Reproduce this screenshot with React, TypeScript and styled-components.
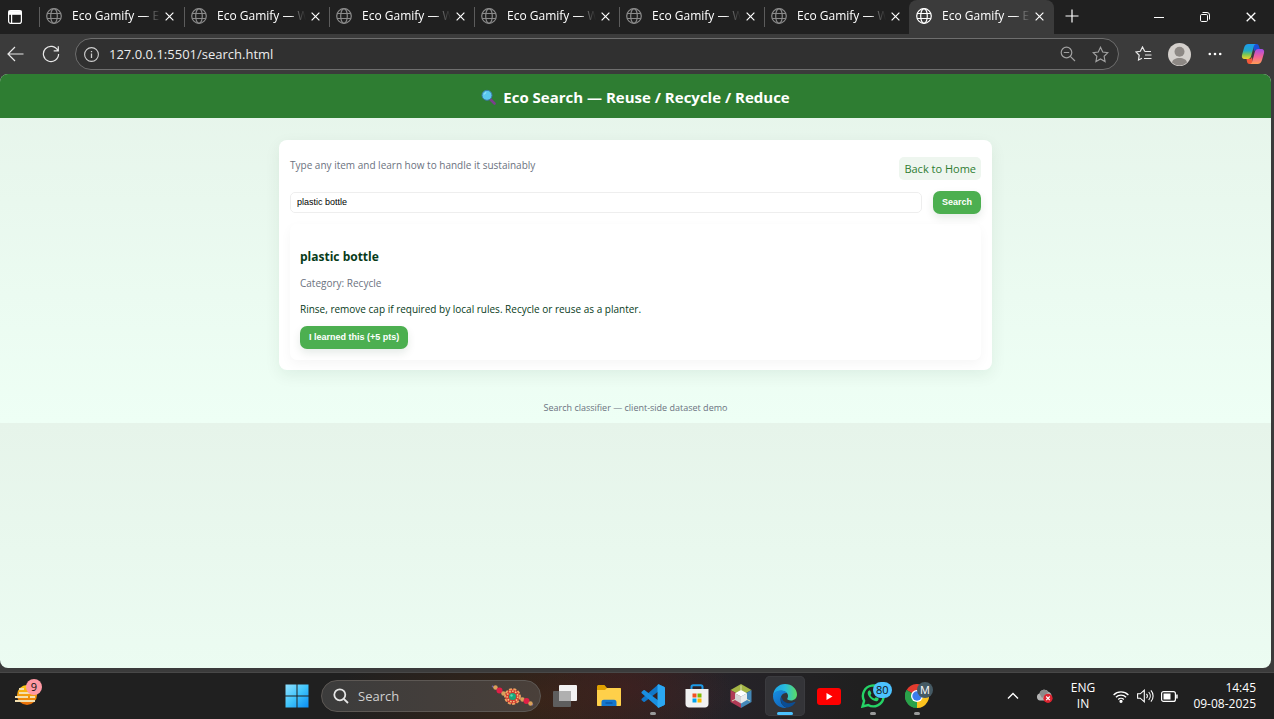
import React from "react";
import styled, { createGlobalStyle } from "styled-components";

const ui = `"Open Sans", "Noto Sans", sans-serif`;
const arial = `"Liberation Sans", sans-serif`;

const GlobalStyle = createGlobalStyle`
  *, *::before, *::after { box-sizing: border-box; }
  body { margin: 0; background: #3b3b3b; font-family: ${ui}; }
  button, input { font: inherit; color: inherit; }
  button { border: 0; padding: 0; background: none; cursor: pointer; }
  svg { display: block; flex: none; }
`;

const Screen = styled.div`
  display: flex;
  flex-direction: column;
  min-height: 100vh;
`;

/* Tab strip */

const TabStrip = styled.div`
  display: flex;
  height: 34px;
  background: #202020;
  color: #fff;
`;

const TabActions = styled.button`
  display: flex;
  align-items: center;
  flex: none;
  width: 39px;
  padding-left: 7px;
`;

const TabList = styled.div`
  display: flex;
  flex: 0 1 auto;
  min-width: 0;
`;

const Tab = styled.div<{ $active?: boolean }>`
  position: relative;
  display: flex;
  align-items: center;
  width: 145px;
  min-width: 0;
  padding: 0 7px 2px 6px;
  border-left: 1px solid transparent;
  border-radius: ${(p) => (p.$active ? "8px 8px 0 0" : "0")};
  background: ${(p) => (p.$active ? "#3b3b3b" : "transparent")};
  color: ${(p) => (p.$active ? "#fff" : "#8a8a8a")};
  &::before {
    content: "";
    position: absolute;
    left: -1px;
    top: 7px;
    width: 1px;
    height: 20px;
    background: ${(p) => (p.$active ? "transparent" : "#5c5c5c")};
  }
`;

const TabTitle = styled.span`
  flex: 1;
  margin-left: 10px;
  white-space: nowrap;
  font-size: 12px;
  line-height: 16px;
  color: #fff;
  mask-image: linear-gradient(to right, #000 74px, rgba(0, 0, 0, 0.4) 79px, transparent 89px);
`;

const TabClose = styled.button`
  display: grid;
  place-items: center;
  width: 16px;
  height: 16px;
  color: #fff;
`;

const NewTab = styled.button`
  display: grid;
  place-items: center;
  width: 36px;
  height: 32px;
`;

const WindowControls = styled.div`
  display: flex;
  margin-left: auto;
`;

const WindowButton = styled.button`
  display: grid;
  place-items: center;
  width: 46px;
  height: 34px;
`;

/* Toolbar */

const Toolbar = styled.div`
  display: flex;
  align-items: center;
  height: 40px;
  padding: 0 3px 0 6px;
  background: #3b3b3b;
  color: #e8e8e8;
`;

const NavButton = styled.button`
  display: grid;
  place-items: center;
  flex: none;
  width: 36px;
  height: 32px;
  &:first-child { width: 18px; margin-right: 9px; }
`;

const AddressBar = styled.div`
  display: flex;
  align-items: center;
  flex: 1;
  height: 32px;
  margin: 0 6px;
  padding: 0 7px 0 8px;
  gap: 10px;
  border: 1px solid #6e6e6e;
  border-radius: 16px;
  background: #303030;
`;

const Address = styled.input`
  flex: 1;
  min-width: 0;
  padding: 0;
  border: 0;
  outline: 0;
  background: none;
  color: #ececec;
  font-size: 13px;
  line-height: 18px;
`;

const BarButton = styled.button`
  display: grid;
  place-items: center;
  width: 22px;
  height: 24px;
  color: #a0a0a0;
`;

const ToolButton = styled.button`
  display: grid;
  place-items: center;
  width: 36px;
  height: 32px;
  &:last-child { margin-left: 2px; }
`;

/* Page */

const Viewport = styled.main`
  display: flex;
  flex-direction: column;
  flex: 1;
  margin-right: 3px;
  overflow: hidden;
  border-radius: 8px;
  color: #073b1a;
`;

const Page = styled.div`
  padding-bottom: 4px;
  background: linear-gradient(#e6f4ea, #eefff5);
`;

const PageRest = styled.div`
  flex: 1;
  background: linear-gradient(#e6f4ea, #eefff5) 0 0 / 100% 349px;
`;

const Header = styled.header`
  display: flex;
  align-items: center;
  justify-content: center;
  gap: 7px;
  height: 44px;
  padding-top: 2px;
  background: #2e7d32;
  color: #fff;
`;

const HeaderTitle = styled.h1`
  margin: 0;
  font-size: 15px;
  line-height: 20px;
  font-weight: 700;
`;

const Card = styled.section`
  max-width: 713px;
  margin: 22px auto 0;
  padding: 16px 11px 10px;
  border-radius: 8px;
  background: #fff;
  box-shadow: 0 5px 16px rgba(7, 59, 26, 0.07);
`;

const IntroRow = styled.div`
  display: flex;
  justify-content: space-between;
  align-items: flex-start;
`;

const Muted = styled.p`
  margin: 0;
  padding: 2px 0 4px;
  font-size: 10px;
  line-height: 14px;
  color: #6b7280;
`;

const HomeLink = styled.a`
  margin-top: 1px;
  padding: 4px 5px 3px;
  border-radius: 5px;
  background: #eef6ef;
  color: #2e7d32;
  font-size: 11px;
  line-height: 16px;
  text-decoration: none;
`;

const SearchForm = styled.form`
  display: flex;
  align-items: center;
  gap: 11px;
  margin-top: 11px;
`;

const SearchInput = styled.input`
  flex: 1;
  min-width: 0;
  height: 21px;
  padding: 0 6px 2px;
  border: 1px solid #eee;
  border-radius: 5px;
  outline: 0;
  background: #fff;
  color: #000;
  font-family: ${arial};
  font-size: 9px;
`;

const GreenButton = styled.button`
  display: block;
  height: 23px;
  padding: 0 9px 2px;
  border-radius: 7px;
  background: #4caf50;
  box-shadow: 0 4px 8px rgba(7, 59, 26, 0.1);
  color: #fff;
  font-family: ${arial};
  font-size: 9px;
  font-weight: 700;
  white-space: nowrap;
`;

const Result = styled.article`
  margin-top: 10px;
  padding: 24px 10px 11px;
  border-radius: 7px;
  background: #fff;
  box-shadow: 0 4px 12px rgba(0, 0, 0, 0.04);
`;

const ResultTitle = styled.h2`
  margin: 0;
  font-size: 12px;
  line-height: 18px;
  font-weight: 700;
`;

const ResultCategory = styled(Muted)`
  margin-top: 8px;
`;

const ResultText = styled.p`
  margin: 7px 0 8px;
  font-size: 10px;
  line-height: 17px;
`;

const Footer = styled.footer`
  margin-top: 27px;
  padding: 4px 0;
  text-align: center;
  font-size: 9px;
  line-height: 14px;
  color: #6b7280;
`;

/* Taskbar */

const Taskbar = styled.footer`
  display: grid;
  grid-template-columns: 1fr auto 335px;
  height: 47px;
  margin-top: 4px;
  border-top: 1px solid #484848;
  color: #fff;
  background:
    radial-gradient(ellipse 110px 60px at 49% 30%, rgba(80, 28, 32, 0.4), transparent),
    radial-gradient(ellipse 200px 90px at 42% 60%, rgba(66, 40, 22, 0.7), transparent),
    radial-gradient(ellipse 160px 90px at 55% 50%, rgba(44, 38, 50, 0.6), transparent),
    #202020;
`;

const Widgets = styled.button`
  position: relative;
  justify-self: start;
  width: 54px;
  padding: 0 0 3px 14px;
`;

const Badge = styled.span<{ $color: string; $ink: string; $left: number }>`
  position: absolute;
  top: 6px;
  left: ${(p) => p.$left}px;
  min-width: 16px;
  height: 16px;
  padding: 0 3px;
  border-radius: 8px;
  background: ${(p) => p.$color};
  color: ${(p) => p.$ink};
  font-size: 11px;
  line-height: 16px;
  text-align: center;
`;

const Apps = styled.nav`
  display: flex;
  align-items: center;
`;

const AppButton = styled.button<{ $active?: boolean; $running?: boolean }>`
  position: relative;
  display: grid;
  place-items: center;
  width: 40px;
  height: 40px;
  margin: 0 2px;
  border-radius: 5px;
  background: ${(p) => (p.$active ? "#343438" : "none")};
  box-shadow: ${(p) => (p.$active ? "inset 0 0 0 1px #3b3b3f" : "none")};
  &::after {
    content: "";
    position: absolute;
    bottom: 1px;
    width: ${(p) => (p.$active ? "16px" : "6px")};
    height: 3px;
    border-radius: 2px;
    background: ${(p) => (p.$active ? "#4cc2ff" : p.$running ? "#9a9a9a" : "transparent")};
  }
`;

const TaskSearch = styled.label`
  display: flex;
  align-items: center;
  width: 220px;
  height: 32px;
  margin: 0 2px;
  padding: 0 5px 0 11px;
  gap: 9px;
  border: 1px solid #5d5854;
  border-radius: 16px;
  background: linear-gradient(to right, #3c3c3c, #4a403a);
`;

const TaskSearchInput = styled.input`
  flex: 1;
  min-width: 0;
  padding: 0;
  border: 0;
  outline: 0;
  background: none;
  font-size: 13px;
  &::placeholder { color: #d0d0d0; opacity: 1; }
`;

const Tray = styled.div`
  display: flex;
  align-items: center;
  justify-content: flex-end;
  padding-right: 18px;
  font-size: 12px;
  line-height: 16px;
`;

const TrayButton = styled.button<{ $w: number }>`
  display: grid;
  place-items: center;
  width: ${(p) => p.$w}px;
  height: 40px;
`;

const TrayText = styled.div<{ $w: number; $align: string }>`
  width: ${(p) => p.$w}px;
  text-align: ${(p) => p.$align};
`;

/* Icons */

const Globe = () => (
  <svg width="16" height="16" viewBox="0 0 16 16" fill="none" stroke="currentColor" strokeWidth="1.2">
    <circle cx="8" cy="8" r="7.3" />
    <ellipse cx="8" cy="8" rx="3.3" ry="7.3" />
    <path d="M1.2 5.5h13.6M1.2 10.5h13.6" />
  </svg>
);

const Cross = ({ size = 9 }: { size?: number }) => (
  <svg width={size} height={size} viewBox="0 0 10 10" stroke="currentColor" strokeWidth="1.3">
    <path d="M.7.7l8.6 8.6M9.3.7L.7 9.3" />
  </svg>
);

const TabActionsIcon = () => (
  <svg width="16" height="16" viewBox="0 0 16 16" fill="none" stroke="#fff" strokeWidth="1.2">
    <rect x="1.6" y="1.6" width="12.8" height="12.8" rx="2.2" />
    <path d="M2 2.2h12v3H2z" fill="#fff" />
    <path d="M4.6 5v9" />
  </svg>
);

const starPath = "M8 1.2l2.1 4.5 4.8.6-3.5 3.4.9 4.9L8 12.2l-4.3 2.4.9-4.9L1.1 6.3l4.8-.6z";

const Magnifier = () => (
  <svg width="15" height="16" viewBox="0 0 15 16">
    <path d="M9.5 10.5l4 4" stroke="#7b3f8c" strokeWidth="2.6" strokeLinecap="round" />
    <circle cx="6" cy="6.3" r="5" fill="#5bc8ee" stroke="#3b79a8" strokeWidth="1" />
    <path d="M3.2 5.5a3 3 0 0 1 2-2" stroke="#a8e6fa" fill="none" />
  </svg>
);

const CopilotIcon = () => (
  <svg width="24" height="22" viewBox="0 0 24 22">
    <defs>
      <linearGradient id="cpA" x1="0" y1="0" x2="0" y2="1">
        <stop offset="0" stopColor="#1b9cf0" /><stop offset=".45" stopColor="#23a9c4" />
        <stop offset=".7" stopColor="#7cc552" /><stop offset="1" stopColor="#f4d22c" />
      </linearGradient>
      <linearGradient id="cpB" x1="0" y1="0" x2="0" y2="1">
        <stop offset="0" stopColor="#a24de8" /><stop offset=".5" stopColor="#f0609a" /><stop offset="1" stopColor="#ff9d55" />
      </linearGradient>
    </defs>
    <path d="M12 1h3.5c1.5 0 2 .8 2.4 2l1.1 3.5h-3c-1.5 0-2.5.8-3 2.3z" fill="#1b50d8" />
    <path d="M7.5 1H15c-1.5.4-2 1.5-2.4 3L10.2 13c-.5 2-1.5 3-3.2 3H3.5C1.2 16 .5 14.3 1 12L3 5c.8-2.7 2-4 4.5-4z" fill="url(#cpA)" />
    <path d="M12 21H8.5c-1.5 0-2-.8-2.4-2L5.5 16H8c1.5 0 2.5-.8 3-2.3z" fill="#f2593a" />
    <path d="M16.5 21H9c1.5-.4 2-1.5 2.4-3L13.8 9c.5-2 1.5-3 3.2-3h3.5c2.3 0 3 1.7 2.5 4l-2 7c-.8 2.7-2 4-4.5 4z" fill="url(#cpB)" />
  </svg>
);

const WidgetIcon = () => (
  <svg width="25" height="22" viewBox="0 0 25 22">
    <defs>
      <linearGradient id="sun" x1="0" y1="0" x2="0" y2="1"><stop offset="0" stopColor="#ffcf16" /><stop offset="1" stopColor="#e86a08" /></linearGradient>
    </defs>
    <circle cx="13" cy="11" r="10" fill="url(#sun)" />
    <path d="M5 5h5M5 9h17M1 13h13M16 13h5M1 17h20" stroke="#f3dfae" strokeWidth="1.8" />
  </svg>
);

const WindowsIcon = () => (
  <svg width="24" height="24" viewBox="0 0 24 24">
    <defs>
      <linearGradient id="win" x1="0" y1="0" x2="1" y2="1"><stop offset="0" stopColor="#8fe0ff" /><stop offset=".5" stopColor="#3fc4fb" /><stop offset="1" stopColor="#0a8cf5" /></linearGradient>
    </defs>
    <path d="M.5.5h11v11H.5zM12.5.5h11v11h-11zM.5 12.500h11v11H.5zM12.5 12.500h11v11h-11z" fill="url(#win)" />
  </svg>
);

const RakhiIcon = () => (
  <svg width="44" height="24" viewBox="0 0 44 24">
    <path d="M1 2l13 8M30 14l12 7" stroke="#7060a0" strokeWidth="1.5" />
    <circle cx="4.5" cy="3.5" r="2.2" fill="#d9a05a" />
    <circle cx="8.5" cy="6.5" r="3" fill="#e01f46" />
    <circle cx="12.5" cy="9.5" r="2.2" fill="#d9a05a" />
    <circle cx="31.5" cy="15.5" r="2.2" fill="#d9a05a" />
    <circle cx="35.5" cy="17" r="3" fill="#e01f46" />
    <circle cx="39.5" cy="19.5" r="2.2" fill="#d9a05a" />
    <circle cx="21.5" cy="12.5" r="7.5" fill="#d23a30" stroke="#efa060" strokeWidth="1.8" strokeDasharray="3 1.5" />
    <circle cx="21.5" cy="12.5" r="5.3" fill="none" stroke="#f3c982" strokeWidth="1.5" strokeDasharray="1.5 1.5" />
    <circle cx="21.5" cy="12.5" r="3.5" fill="#18a77a" />
    <circle cx="20.5" cy="11.5" r="1.2" fill="#5bd8b0" />
  </svg>
);

const TaskViewIcon = () => (
  <svg width="24" height="22" viewBox="0 0 24 22">
    <rect x="6" y="0" width="18" height="16" rx="1" fill="#f2f2f2" />
    <rect x="0" y="6" width="18" height="16" rx="1" fill="#5e5e5e" />
    <rect x="6" y="6" width="12" height="10" fill="#b0b0b0" />
  </svg>
);

const FolderIcon = () => (
  <svg width="24" height="22" viewBox="0 0 24 22">
    <path d="M0 1.5C0 .7.7 0 1.5 0h6L10 3h14v8H0z" fill="#e0a000" />
    <path d="M0 5h8l2-2h12.500c.8 0 1.5.7 1.5 1.5V20c0 .6-.4 1-1 1H1c-.6 0-1-.4-1-1z" fill="#ffd04a" />
    <path d="M4.500 21v-4c0-1.400 1-2.300 2.300-2.300h10.400c1.400 0 2.300 1 2.300 2.300v4z" fill="#1477cf" />
    <path d="M8.500 18h7" stroke="#0a4f99" strokeWidth="1.2" />
  </svg>
);

const VSCodeIcon = () => (
  <svg width="24" height="24" viewBox="0 0 24 24">
    <path d="M17.5.3L23 2.800c.6.3 1 .8 1 1.400L18 7 3.800 17.800c-.4.3-.9.3-1.300 0L.7 16.200c-.4-.4-.4-1.100 0-1.500z" fill="#1177c8" />
    <path d="M17.500 23.700L23 21.200c.6-.3 1-.8 1-1.400L18 17 3.800 6.200c-.4-.3-.9-.3-1.300 0L.7 7.800c-.4.400-.4 1.100 0 1.500z" fill="#1a8fe0" />
    <path d="M17.500 23.700c-.7-.1-1-.7-1-1.300V1.600c0-.6.300-1.200 1-1.300L23 2.800c.6.300 1 .8 1 1.400v15.600c0 .6-.4 1.100-1 1.400z" fill="#2ba7f2" />
  </svg>
);

const StoreIcon = () => (
  <svg width="24" height="24" viewBox="0 0 24 24">
    <path d="M6.500 6V3c0-1 .6-1.700 1.700-1.700h7.600c1.100 0 1.700.7 1.700 1.700v3" fill="none" stroke="#1d9be8" strokeWidth="2" />
    <path d="M.5 5h23v15c0 2-1.500 3.500-3.500 3.500H4C2 23.500.5 22 .5 20z" fill="#f1f1f1" />
    <path d="M7.500 9.500h4v4h-4z" fill="#f25022" /><path d="M12.500 9.500h4v4h-4z" fill="#7fba00" />
    <path d="M7.500 14.500h4v4h-4z" fill="#00a4ef" /><path d="M12.500 14.500h4v4h-4z" fill="#ffb900" />
  </svg>
);

const NetBeansIcon = () => (
  <svg width="22" height="24" viewBox="0 0 22 24">
    <path d="M11 0l10.500 6L11 12 .5 6z" fill="#a3b545" />
    <path d="M.5 6L11 12v12L.5 18z" fill="#b03a55" />
    <path d="M21.500 6L11 12v12l10.500-6z" fill="#4488b8" />
    <path d="M11 6l6 3.200L11 12.500 5 9.200z" fill="#fff" />
    <path d="M5 9.200l6 3.300v7L5 16z" fill="#d4d4d4" /><path d="M17 9.200l-6 3.300v7l6-3.500z" fill="#ececec" />
    <path d="M11 1.500V6M2 17l3-1.500M20 17l-3-1.500" stroke="#d8dfb2" />
  </svg>
);

const EdgeIcon = () => (
  <svg width="24" height="24" viewBox="0 0 24 24">
    <defs>
      <linearGradient id="edA" x1="0" y1=".3" x2="1" y2=".3"><stop offset="0" stopColor="#1ba0e8" /><stop offset=".5" stopColor="#28bde0" /><stop offset="1" stopColor="#5bdd62" /></linearGradient>
      <linearGradient id="edB" x1="0" y1="0" x2=".6" y2="1"><stop offset="0" stopColor="#188fe0" /><stop offset="1" stopColor="#1068c0" /></linearGradient>
    </defs>
    <path d="M0 12C.4 4.800 5.600 0 12 0c7 0 12 5 12 10.500 0 3.800-2.800 6-6 6-2.500 0-4.300-.9-3.700-1.900 1.300-2 1-5.200-2-6.800C7.800 5.500 2 7.500 0 12z" fill="url(#edA)" />
    <path d="M0 12c1-4.200 4.600-5.700 8.200-5.500 3 .1 4.700 1.200 5.800 2.700-3-1-6.500 2-6.500 6.300 0 4.200 3 7.300 6.500 8.300C6.500 25 0 19.300 0 12z" fill="url(#edB)" />
    <path d="M8.500 12.500C6.500 18.500 10.500 24 15 23.500c3.200-.6 5.700-2.500 7.200-4.700.4-.7-.1-1-.8-.7-5.400 2.500-11.900 1-12.900-5.600z" fill="#0b4d94" />
  </svg>
);

const YouTubeIcon = () => (
  <svg width="24" height="17" viewBox="0 0 24 17">
    <rect width="24" height="17" rx="3" fill="#f00" /><path d="M9.500 5v7L15.500 8.500z" fill="#fff" />
  </svg>
);

const WhatsAppIcon = () => (
  <svg width="24" height="24" viewBox="0 0 24 24">
    <path d="M1.500 22.500l1.600-5.700A10.400 10.400 0 1 1 7.200 21z" fill="none" stroke="#25d366" strokeWidth="2.400" />
    <path d="M8.600 6.200c-.5 0-1.900.9-1.900 2.900 0 2.500 2.500 5.200 3.800 6.200 1.500 1.200 3.600 2.200 5.200 1.900 1.300-.3 2-1.300 2-2.500 0-.4-2.600-1.600-2.900-1.500-.5 0-1 1.500-1.500 1.400-1.500-.5-3.200-2-3.900-3.600-.1-.4 1-1 .9-1.600 0-.5-.9-3.100-1.700-3.200z" fill="#25d366" />
  </svg>
);

const ChromeIcon = () => (
  <svg width="24" height="24" viewBox="0 0 24 24">
    <path d="M12 12L1.600 6A12 12 0 0 1 22.400 6z" fill="#e33b2e" />
    <path d="M12 12L22.400 6A12 12 0 0 1 12 24z" fill="#fcc31e" />
    <path d="M12 12v12A12 12 0 0 1 1.600 6z" fill="#2aa14a" />
    <path d="M12 6h10.400a12 12 0 0 1 1.200 3H14z" fill="#fcc31e" />
    <path d="M1.600 6L7 15l5 3-3.200 5.600A12 12 0 0 1 1.600 6z" fill="#2aa14a" />
    <circle cx="12" cy="12" r="6" fill="#fff" /><circle cx="12" cy="12" r="4.700" fill="#3b7ded" />
  </svg>
);

const tabs = ["Eco Gamify — E", "Eco Gamify — W", "Eco Gamify — W", "Eco Gamify — W", "Eco Gamify — W", "Eco Gamify — W", "Eco Gamify — E"];

export default function App() {
  return (
    <Screen>
      <GlobalStyle />
      <TabStrip>
        <TabActions aria-label="Tab actions"><TabActionsIcon /></TabActions>
        <TabList>
          {tabs.map((title, i) => (
            <Tab key={i} $active={i === tabs.length - 1}>
              <Globe />
              <TabTitle>{title}</TabTitle>
              <TabClose aria-label="Close tab"><Cross /></TabClose>
            </Tab>
          ))}
        </TabList>
        <NewTab aria-label="New tab">
          <svg width="14" height="14" viewBox="0 0 14 14" stroke="#fff" strokeWidth="1.200"><path d="M7 .5v13M.5 7h13" /></svg>
        </NewTab>
        <WindowControls>
          <WindowButton aria-label="Minimise">
            <svg width="10" height="10" viewBox="0 0 10 10" stroke="#fff"><path d="M0 5.500h10" /></svg>
          </WindowButton>
          <WindowButton aria-label="Restore">
            <svg width="10" height="10" viewBox="0 0 10 10" fill="none" stroke="#fff"><rect x=".5" y="2.500" width="7" height="7" rx="1.200" /><path d="M2.500.5H7A2.500 2.500 0 0 1 9.500 3v4.500" /></svg>
          </WindowButton>
          <WindowButton aria-label="Close"><Cross size={10} /></WindowButton>
        </WindowControls>
      </TabStrip>

      <Toolbar>
        <NavButton aria-label="Back">
          <svg width="17" height="16" viewBox="0 0 17 16" fill="none" stroke="currentColor" strokeWidth="1.200"><path d="M8 1L1 8l7 7M1 8h15.500" /></svg>
        </NavButton>
        <NavButton aria-label="Refresh">
          <svg width="18" height="18" viewBox="0 0 18 18" fill="none" stroke="currentColor" strokeWidth="1.200"><path d="M15.800 5.500A7.600 7.600 0 1 0 16.600 9M16.300 1.200v4.600h-4.600" /></svg>
        </NavButton>
        <AddressBar>
          <svg width="15" height="15" viewBox="0 0 15 15" fill="none" stroke="#d0d0d0" strokeWidth="1.100"><circle cx="7.500" cy="7.500" r="6.900" /><path d="M7.500 6.500v4.500M7.500 4v1.300" strokeWidth="1.300" /></svg>
          <Address aria-label="Address" defaultValue="127.0.0.1:5501/search.html" />
          <BarButton aria-label="Zoom">
            <svg width="16" height="16" viewBox="0 0 16 16" fill="none" stroke="currentColor" strokeWidth="1.200"><circle cx="6.500" cy="6.500" r="5.300" /><path d="M10.300 10.300L15 15M3.800 6.500h5.400" /></svg>
          </BarButton>
          <BarButton aria-label="Add to favourites">
            <svg width="17" height="17" viewBox="0 0 16 16" fill="none" stroke="currentColor" strokeWidth="1.100"><path d={starPath} /></svg>
          </BarButton>
        </AddressBar>
        <ToolButton aria-label="Favourites">
          <svg width="17" height="16" viewBox="0 0 17 16" fill="none" stroke="currentColor" strokeWidth="1.200"><path d="M9.800 5.500L7.500 1 5.300 5.300 1 6l3.200 3.300L3.500 14 7 12.200M9.800 5.500H16M10 9h6.500M9 12.500h7.500" /></svg>
        </ToolButton>
        <ToolButton aria-label="Profile">
          <svg width="23" height="23" viewBox="0 0 23 23"><circle cx="11.500" cy="11.500" r="11.500" fill="#d4d0cc" /><circle cx="11.500" cy="8.800" r="5" fill="#8d8884" /><path d="M4 19.500c.6-3 3.500-4.500 7.500-4.500s6.900 1.500 7.500 4.500a11 11 0 0 1-15 0z" fill="#8d8884" /></svg>
        </ToolButton>
        <ToolButton aria-label="Settings and more">
          <svg width="14" height="4" viewBox="0 0 14 4" fill="#fff"><circle cx="1.800" cy="2" r="1.300" /><circle cx="7" cy="2" r="1.300" /><circle cx="12.200" cy="2" r="1.300" /></svg>
        </ToolButton>
        <ToolButton aria-label="Copilot"><CopilotIcon /></ToolButton>
      </Toolbar>

      <Viewport>
        <Page>
          <Header>
            <Magnifier />
            <HeaderTitle>Eco Search — Reuse / Recycle / Reduce</HeaderTitle>
          </Header>
          <Card>
            <IntroRow>
              <Muted>Type any item and learn how to handle it sustainably</Muted>
              <HomeLink href="#">Back to Home</HomeLink>
            </IntroRow>
            <SearchForm onSubmit={(e) => e.preventDefault()}>
              <SearchInput aria-label="Item" defaultValue="plastic bottle" />
              <GreenButton>Search</GreenButton>
            </SearchForm>
            <Result>
              <ResultTitle>plastic bottle</ResultTitle>
              <ResultCategory>Category: Recycle</ResultCategory>
              <ResultText>Rinse, remove cap if required by local rules. Recycle or reuse as a planter.</ResultText>
              <GreenButton>I learned this (+5 pts)</GreenButton>
            </Result>
          </Card>
          <Footer>Search classifier — client-side dataset demo</Footer>
        </Page>
        <PageRest />
      </Viewport>

      <Taskbar>
        <Widgets aria-label="Widgets">
          <WidgetIcon />
          <Badge $color="#ff99a4" $ink="#111" $left={26}>9</Badge>
        </Widgets>
        <Apps>
          <AppButton aria-label="Start"><WindowsIcon /></AppButton>
          <TaskSearch>
            <svg width="16" height="16" viewBox="0 0 16 16" fill="none" stroke="#e6e6e6" strokeWidth="1.800"><circle cx="6.800" cy="6.800" r="5.500" /><path d="M10.800 10.800L15 15" /></svg>
            <TaskSearchInput aria-label="Search" placeholder="Search" />
            <RakhiIcon />
          </TaskSearch>
          <AppButton aria-label="Task view"><TaskViewIcon /></AppButton>
          <AppButton aria-label="File Explorer"><FolderIcon /></AppButton>
          <AppButton aria-label="Visual Studio Code" $running><VSCodeIcon /></AppButton>
          <AppButton aria-label="Microsoft Store"><StoreIcon /></AppButton>
          <AppButton aria-label="NetBeans"><NetBeansIcon /></AppButton>
          <AppButton aria-label="Microsoft Edge" $active><EdgeIcon /></AppButton>
          <AppButton aria-label="YouTube"><YouTubeIcon /></AppButton>
          <AppButton aria-label="WhatsApp" $running><WhatsAppIcon /><Badge $color="#4cc2ff" $ink="#111" $left={20}>80</Badge></AppButton>
          <AppButton aria-label="Chrome" $running><ChromeIcon /><Badge $color="#455a64" $ink="#fff" $left={20}>M</Badge></AppButton>
        </Apps>
        <Tray>
          <TrayButton $w={30} aria-label="Show hidden icons">
            <svg width="12" height="8" viewBox="0 0 12 8" fill="none" stroke="#fff" strokeWidth="1.400"><path d="M1 6.500l5-5 5 5" /></svg>
          </TrayButton>
          <TrayButton $w={32} aria-label="OneDrive">
            <svg width="17" height="14" viewBox="0 0 17 14"><path d="M4 11.500a3.600 3.600 0 0 1-.5-7A5 5 0 0 1 12.500 3c2 .5 3 2 3 4l-5 4.500z" fill="#b4b4b4" /><path d="M3.500 4.500A5 5 0 0 1 12.500 3L6 9z" fill="#8a8a8a" /><circle cx="12" cy="9.300" r="4.600" fill="#dc2430" /><path d="M10.200 7.500l3.600 3.600M13.800 7.500l-3.600 3.600" stroke="#fff" strokeWidth="1.200" /></svg>
          </TrayButton>
          <TrayText $w={46} $align="center">ENG<br />IN</TrayText>
          <TrayButton $w={30} aria-label="Wi-Fi">
            <svg width="16" height="13" viewBox="0 0 16 13" fill="none" stroke="#fff" strokeWidth="1.300"><path d="M.6 5a10.500 10.500 0 0 1 14.800 0M2.900 7.300a7.200 7.200 0 0 1 10.200 0M5.200 9.500a4 4 0 0 1 5.600 0" /><circle cx="8" cy="11.300" r="1" fill="#fff" /></svg>
          </TrayButton>
          <TrayButton $w={18} aria-label="Volume">
            <svg width="17" height="14" viewBox="0 0 17 14" fill="none" stroke="#fff" strokeWidth="1.100"><path d="M.6 4.800h2.700L7.300 1.200v11.600L3.300 9.200H.6zM9.500 4.800a3.500 3.500 0 0 1 0 4.400M11.700 3a6 6 0 0 1 0 8M13.900 1.300a8.500 8.500 0 0 1 0 11.400" /></svg>
          </TrayButton>
          <TrayButton $w={30} aria-label="Battery">
            <svg width="17" height="11" viewBox="0 0 17 11"><rect x=".6" y=".6" width="13.800" height="9.800" rx="2" fill="none" stroke="#fff" strokeWidth="1.200" /><path d="M2.500 2.500h7v6h-7zM15.200 3.500h1.500v4h-1.500z" fill="#fff" /></svg>
          </TrayButton>
          <TrayText $w={72} $align="right">14:45<br />09-08-2025</TrayText>
        </Tray>
      </Taskbar>
    </Screen>
  );
}
